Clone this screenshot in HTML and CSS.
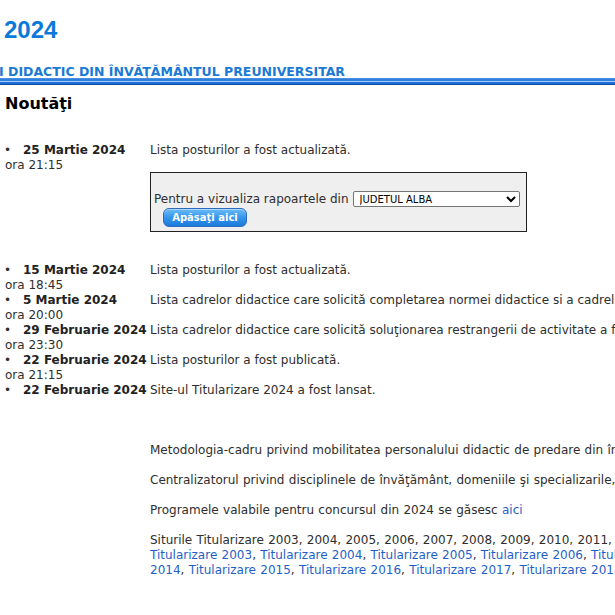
FILE: index.html
```html
<!DOCTYPE html>
<html lang="ro">
<head>
<meta charset="utf-8">
<title>Titularizare 2024</title>
<link rel="stylesheet" href="styles.css">
</head>
<body>
<header class="masthead">
  <h1 class="year">2024</h1>
  <div class="subtitle">I DIDACTIC DIN ÎNVĂŢĂMÂNTUL PREUNIVERSITAR</div>
  <div class="rule"></div>
</header>
<main class="content">
  <h2 class="news-title">Noutăţi</h2>
  <div class="news">
    <div class="news-date"><div class="date-line"><span class="bullet">•</span><b>25 Martie 2024</b></div><div>ora 21:15</div></div>
    <div class="news-text">
      <div>Lista posturilor a fost actualizată.</div>
      <form class="report-box">
        <div class="report-row">
          <span>Pentru a vizualiza rapoartele din</span>
          <select class="county">
            <option>JUDETUL ALBA</option>
            <option>JUDETUL ARAD</option>
            <option>JUDETUL ARGES</option>
          </select>
        </div>
        <button type="button" class="go-btn">Apăsaţi aici</button>
      </form>
    </div>

    <div class="news-date"><div class="date-line"><span class="bullet">•</span><b>15 Martie 2024</b></div><div>ora 18:45</div></div>
    <div class="news-text">Lista posturilor a fost actualizată.</div>

    <div class="news-date"><div class="date-line"><span class="bullet">•</span><b>5 Martie 2024</b></div><div>ora 20:00</div></div>
    <div class="news-text">Lista cadrelor didactice care solicită completarea normei didactice si a cadrelor didactice titulare care solicită transferul a fost actualizată.</div>

    <div class="news-date"><div class="date-line"><span class="bullet">•</span><b>29 Februarie 2024</b></div><div>ora 23:30</div></div>
    <div class="news-text">Lista cadrelor didactice care solicită soluţionarea restrangerii de activitate a fost publicată.</div>

    <div class="news-date"><div class="date-line"><span class="bullet">•</span><b>22 Februarie 2024</b></div><div>ora 21:15</div></div>
    <div class="news-text">Lista posturilor a fost publicată.</div>

    <div class="news-date"><div class="date-line"><span class="bullet">•</span><b>22 Februarie 2024</b></div></div>
    <div class="news-text">Site-ul Titularizare 2024 a fost lansat.</div>
  </div>

  <section class="info">
    <p>Metodologia-cadru privind mobilitatea personalului didactic de predare din învăţământul preuniversitar în anul şcolar 2024-2025 se găseşte <a href="#">aici</a></p>
    <p>Centralizatorul privind disciplinele de învăţământ, domeniile şi specializarile, precum şi probele de concurs valabile pentru încadrarea personalului didactic se găseşte <a href="#">aici</a></p>
    <p>Programele valabile pentru concursul din 2024 se găsesc <a href="#">aici</a></p>
    <p>Siturile Titularizare 2003, 2004, 2005, 2006, 2007, 2008, 2009, 2010, 2011, 2012, 2013, 2014, 2015, 2016, 2017, 2018, 2019, 2020, 2021, 2022, 2023 se găsesc la adresele:<br>
    <a href="#">Titularizare 2003</a>, <a href="#">Titularizare 2004</a>, <a href="#">Titularizare 2005</a>, <a href="#">Titularizare 2006</a>, <a href="#">Titularizare 2007</a>, <a href="#">Titularizare 2008</a>, <a href="#">Titularizare 2009</a>, <a href="#">Titularizare 2010</a>, <a href="#">Titularizare 2011</a>, <a href="#">Titularizare 2012</a>, <a href="#">Titularizare 2013</a>, <a href="#">Titularizare<br>2014</a>, <a href="#">Titularizare 2015</a>, <a href="#">Titularizare 2016</a>, <a href="#">Titularizare 2017</a>, <a href="#">Titularizare 2018</a>, <a href="#">Titularizare 2019</a></p>
  </section>
</main>
</body>
</html>
```
FILE: styles.css
```css
html, body {
  margin: 0;
  padding: 0;
  overflow: hidden;
  background: #ffffff;
}

body {
  font-family: "DejaVu Sans", Verdana, sans-serif;
  font-size: 12px;
  line-height: 15px;
  color: #2e2e2e;
}

.masthead {
  display: flex;
  flex-direction: column;
}

.year {
  margin: 16px 0 0 0;
  padding-left: 4px;
  font-family: "Liberation Sans", Arial, sans-serif;
  font-weight: bold;
  font-size: 24px;
  line-height: 28px;
  color: #0a7ad8;
}

.subtitle {
  margin: 21px 0 0 -1px;
  font-family: "DejaVu Sans", Verdana, sans-serif;
  font-weight: bold;
  font-size: 12.5px;
  line-height: 13px;
  color: #1a7ad4;
  white-space: nowrap;
}

.rule {
  height: 7px;
  background: linear-gradient(to bottom,
    #4a8ee0 0px, #4a8ee0 1px,
    #2f7fde 1px, #2f7fde 3px,
    #a4cbf3 3px, #a4cbf3 4px,
    #1f6fd6 4px, #1f6fd6 6px,
    #0a4aa8 6px, #0a4aa8 7px);
}

.content {
  padding-left: 5px;
}

.news-title {
  margin: 9px 0 0 0;
  font-size: 16px;
  line-height: 20px;
  font-weight: bold;
  color: #000000;
}

.news {
  display: grid;
  grid-template-columns: 145px auto;
  margin-top: 29px;
  white-space: nowrap;
}

.news-date {
  height: 30px;
}

.news-date b {
  color: #222222;
}

.bullet {
  display: inline-block;
  width: 19px;
  margin-left: -1px;
}

.report-box {
  display: flex;
  flex-direction: column;
  align-items: flex-start;
  width: 369px;
  margin: 14px 0 31px 0;
  padding: 18px 3px 4px 3px;
  border: 1px solid #222222;
  background: #efefef;
}

.report-row {
  display: flex;
  align-items: center;
  gap: 4px;
  height: 16px;
}

.county {
  width: 167px;
  height: 16px;
  padding: 0 0 0 2px;
  font-family: "DejaVu Sans", Verdana, sans-serif;
  font-size: 10px;
  color: #000;
  background: #ffffff;
  border: 1px solid #767676;
  border-radius: 2px;
}

.go-btn {
  margin: 1px 0 0 9px;
  width: 84px;
  height: 19px;
  padding: 0;
  font-family: "DejaVu Sans", Verdana, sans-serif;
  font-weight: bold;
  font-size: 10px;
  color: #ffffff;
  border: 1px solid #2b6cc0;
  border-radius: 6px;
  background: linear-gradient(to bottom, #6cbcf7 0%, #3596ec 50%, #1b7adb 100%);
  box-shadow: inset 0 1px 0 rgba(255,255,255,0.45);
}

.info {
  margin: 30px 0 0 145px;
  white-space: nowrap;
  word-spacing: 0.5px;
}

.info p {
  margin: 0 0 15px 0;
}

.info a {
  color: #1f5fc8;
  text-decoration: none;
}
```
